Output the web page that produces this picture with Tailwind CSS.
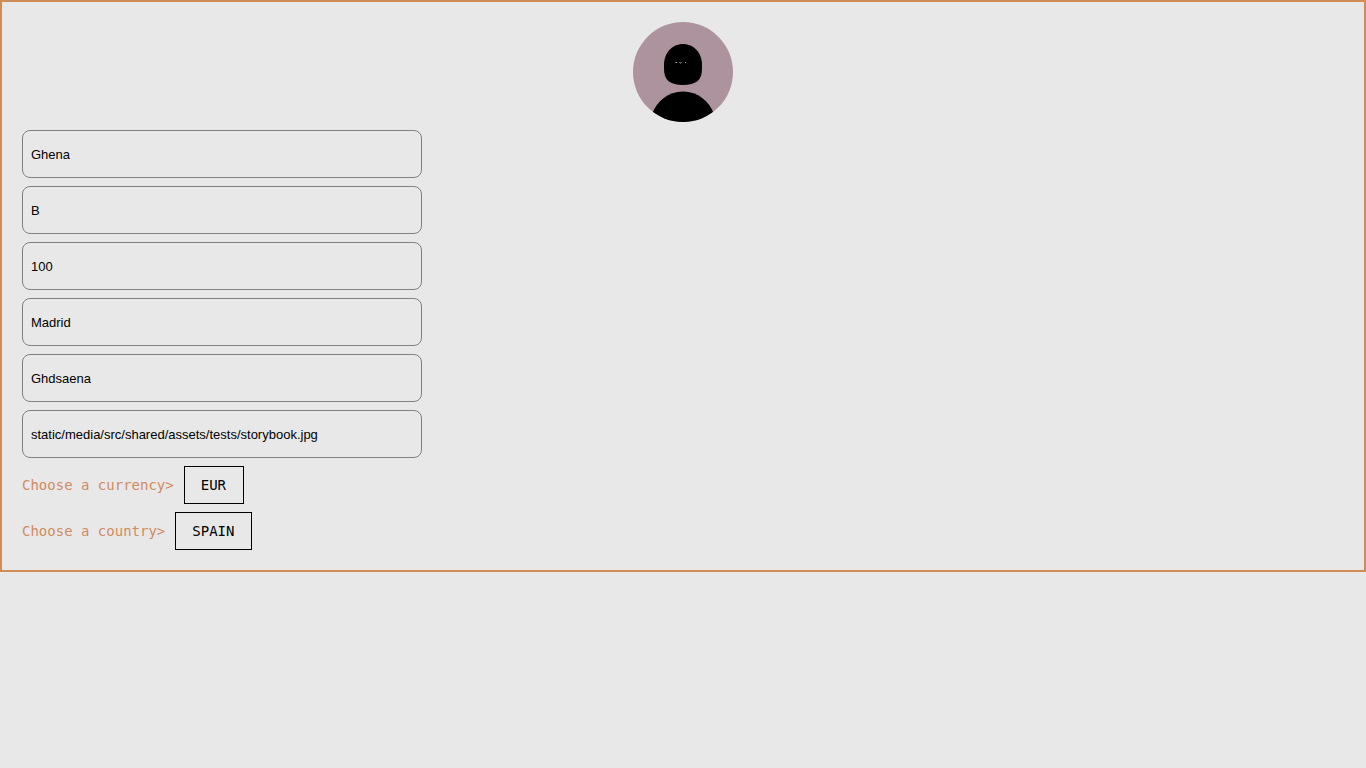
<!DOCTYPE html>
<html lang="en">
<head>
<meta charset="utf-8">
<meta name="viewport" content="width=device-width, initial-scale=1">
<title>Profile form</title>
<script src="https://cdn.jsdelivr.net/npm/@tailwindcss/browser@4"></script>
</head>
<body class="min-h-screen bg-[#e8e8e8] text-black">
<form class="flex flex-col gap-2 border-2 border-[#d18b54] p-5">
  <svg class="size-[100px] self-center" viewBox="0 0 100 100" role="img" aria-label="Profile picture">
    <defs><clipPath id="disc"><circle cx="50" cy="50" r="50"/></clipPath></defs>
    <g clip-path="url(#disc)">
      <rect width="100" height="100" fill="#ad939d"/>
      <path d="M50 22C61 22 69 31 69 43V47C69 58 63 63 50 63S31 58 31 47V43C31 31 39 22 50 22Z"/>
      <path d="M19 92C24 79 35 69.500 50 69.500S76 79 81 92V100H19Z"/>
      <path d="M42.500 40.500h1.500M46.500 40.500l1 .5 1-.5M52.500 40v1" fill="none" stroke="#ddd" stroke-width=".8"/>
    </g>
  </svg>
  <input aria-label="First name" type="text" value="Ghena" class="h-12 w-full max-w-[400px] rounded-lg border border-[#808080] px-2 font-['Liberation_Sans',sans-serif] text-[13px]">
  <input aria-label="Last name" type="text" value="B" class="h-12 w-full max-w-[400px] rounded-lg border border-[#808080] px-2 font-['Liberation_Sans',sans-serif] text-[13px]">
  <input aria-label="Amount" type="text" value="100" class="h-12 w-full max-w-[400px] rounded-lg border border-[#808080] px-2 font-['Liberation_Sans',sans-serif] text-[13px]">
  <input aria-label="City" type="text" value="Madrid" class="h-12 w-full max-w-[400px] rounded-lg border border-[#808080] px-2 font-['Liberation_Sans',sans-serif] text-[13px]">
  <input aria-label="Username" type="text" value="Ghdsaena" class="h-12 w-full max-w-[400px] rounded-lg border border-[#808080] px-2 font-['Liberation_Sans',sans-serif] text-[13px]">
  <input aria-label="Image" type="text" value="static/media/src/shared/assets/tests/storybook.jpg" class="h-12 w-full max-w-[400px] rounded-lg border border-[#808080] px-2 font-['Liberation_Sans',sans-serif] text-[13px]">
  <div class="flex items-center gap-2.5 font-['DejaVu_Sans_Mono',monospace] text-sm">
    <label for="currency" class="text-[#d18b5f]">Choose a currency&gt;</label>
    <select id="currency" class="h-[38px] appearance-none border border-black px-4"><option>EUR</option></select>
  </div>
  <div class="flex items-center gap-2.5 font-['DejaVu_Sans_Mono',monospace] text-sm">
    <label for="country" class="text-[#d18b5f]">Choose a country&gt;</label>
    <select id="country" class="h-[38px] appearance-none border border-black px-4"><option>SPAIN</option></select>
  </div>
</form>
</body>
</html>
